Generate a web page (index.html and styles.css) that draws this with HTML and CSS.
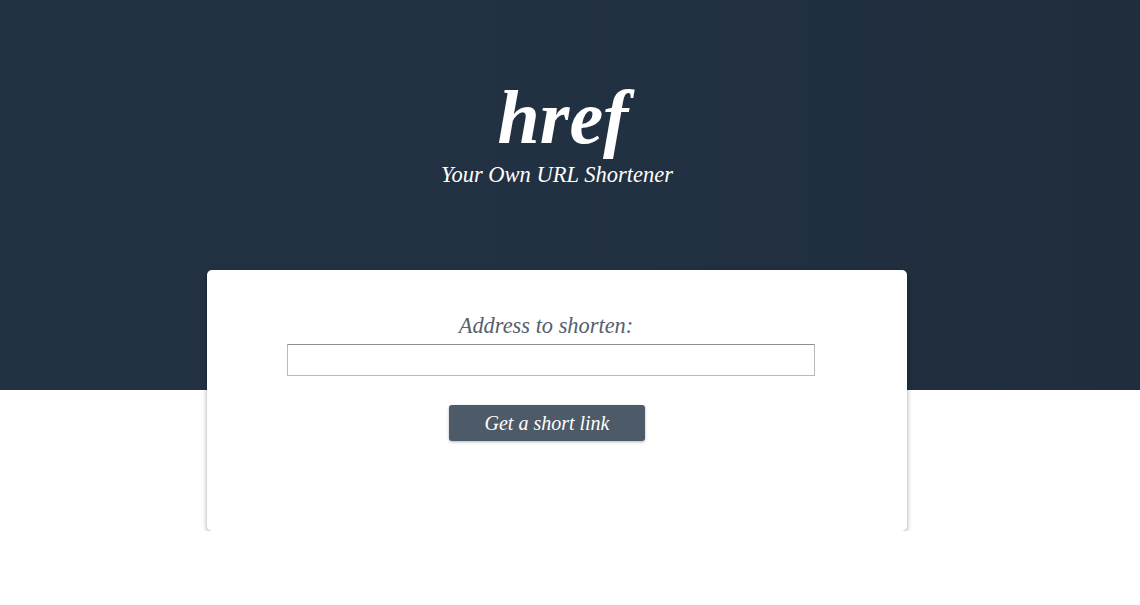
FILE: index.html
```html
<!DOCTYPE html>
<html lang="en">
<head>
<meta charset="utf-8">
<title>href - Your Own URL Shortener</title>
<link rel="stylesheet" href="styles.css">
</head>
<body>
  <header class="hero">
    <h1 class="logo">href</h1>
    <p class="tagline">Your Own URL Shortener</p>
  </header>
  <main class="card-wrap">
    <form class="card">
      <label class="label" for="url">Address to shorten:</label>
      <input class="field" id="url" type="text">
      <button class="btn" type="button">Get a short link</button>
    </form>
  </main>
</body>
</html>
```
FILE: styles.css
```css
html, body {
  margin: 0;
  padding: 0;
  background: #ffffff;
}
body {
  font-family: "Liberation Serif", "DejaVu Serif", serif;
  font-style: italic;
}
.hero {
  height: 390px;
  background: linear-gradient(90deg, #233243 0%, #223142 50%, #1f2d3d 100%);
  display: flex;
  flex-direction: column;
  align-items: center;
  padding-right: 26px;
  box-sizing: border-box;
}
.logo {
  margin: 76px 0 0 12px;
  font-size: 76px;
  font-weight: bold;
  font-style: italic;
  color: #ffffff;
  line-height: 82px;
}
.tagline {
  margin: 4px 0 0;
  font-size: 22.5px;
  color: #ffffff;
  line-height: 26px;
}
.card-wrap {
  margin-top: -120px;
  padding-right: 26px;
  display: flex;
  justify-content: center;
}
.card {
  width: 700px;
  height: 261px;
  background: #ffffff;
  border-radius: 5px;
  box-shadow: 0 2px 5px rgba(0, 0, 0, 0.35);
  display: flex;
  flex-direction: column;
  align-items: center;
  box-sizing: border-box;
  padding-top: 43px;
  padding-right: 12px;
}
.label {
  font-size: 22.4px;
  color: #56606b;
  line-height: 26px;
  margin-right: 10px;
}
.field {
  margin-top: 5px;
  width: 528px;
  height: 32px;
  box-sizing: border-box;
  border: 1px solid #b9b9b9;
  border-top-color: #8e8e8e;
  background: #fff;
  padding: 0 6px;
  font: inherit;
}
.btn {
  margin-top: 29px;
  margin-right: 8px;
  width: 196px;
  height: 36px;
  border: 0;
  border-radius: 3px;
  background: #4d5a68;
  color: #ffffff;
  font-family: inherit;
  font-style: italic;
  font-size: 20px;
  box-shadow: 0 1px 3px rgba(0, 0, 0, 0.3);
  padding: 0;
}
```
